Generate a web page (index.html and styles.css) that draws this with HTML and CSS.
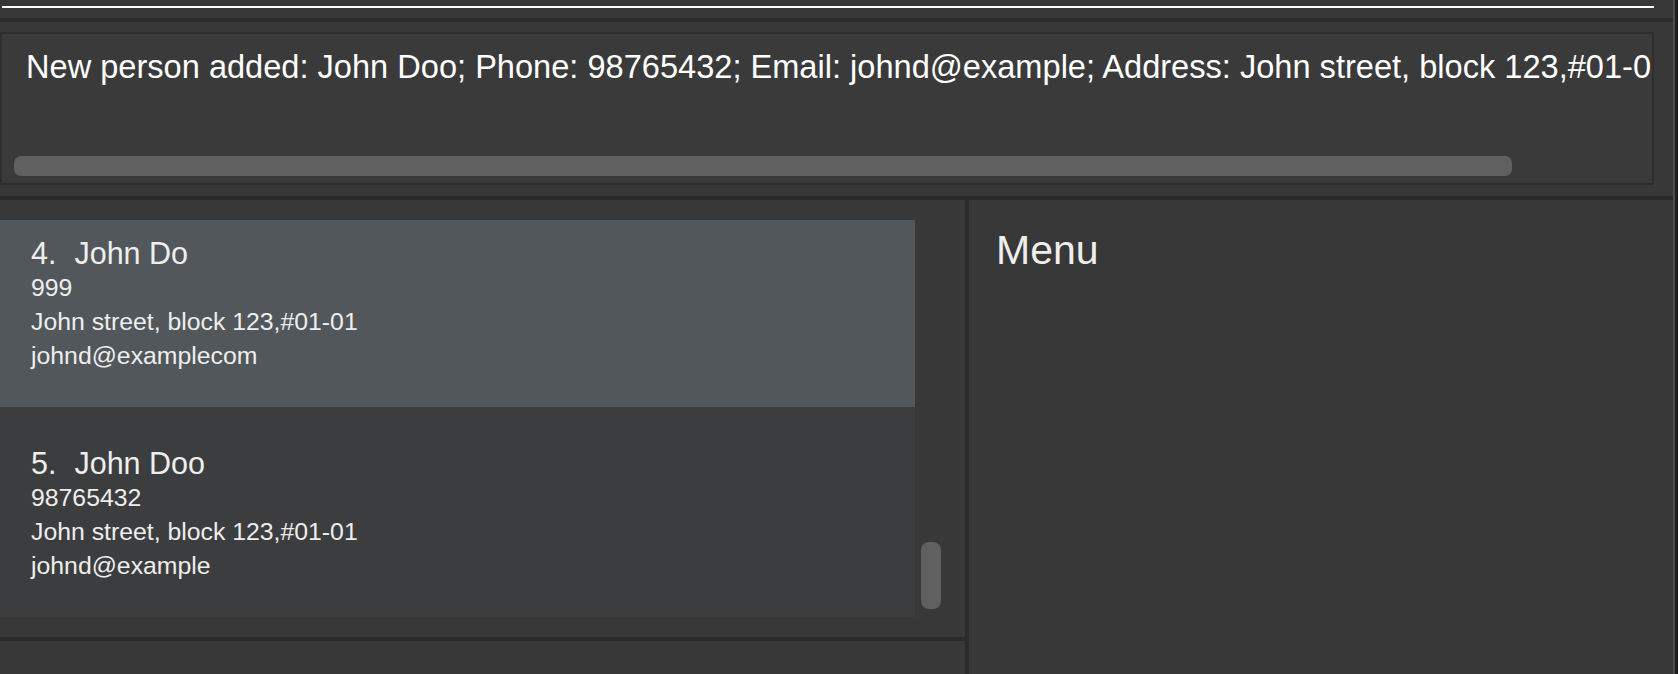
FILE: index.html
```html
<!DOCTYPE html>
<html>
<head>
<meta charset="utf-8">
<link rel="stylesheet" href="styles.css">
</head>
<body>
<div class="screen">
  <div class="window">
    <div class="command"><div class="command-line"></div></div>
    <div class="sep"></div>
    <div class="result-wrap">
      <div class="result">
        <div class="result-text">New person added: John Doo; Phone: 98765432; Email: johnd@example; Address: John street, block 123,#01-01</div>
        <div class="hthumb"></div>
      </div>
    </div>
    <div class="sep"></div>
    <div class="main">
      <div class="list-panel">
        <div class="list">
          <div class="cards">
            <div class="card card-selected">
              <div class="name-row"><span class="cid">4.</span><span class="cname">John Do</span></div>
              <div class="detail">999</div>
              <div class="detail">John street, block 123,#01-01</div>
              <div class="detail">johnd@examplecom</div>
            </div>
            <div class="card card-odd">
              <div class="name-row"><span class="cid">5.</span><span class="cname">John Doo</span></div>
              <div class="detail">98765432</div>
              <div class="detail">John street, block 123,#01-01</div>
              <div class="detail">johnd@example</div>
            </div>
          </div>
          <div class="vscroll"><div class="vthumb"></div></div>
        </div>
        <div class="list-sep"></div>
      </div>
      <div class="vdiv"></div>
      <div class="menu-panel">
        <div class="menu-title">Menu</div>
      </div>
    </div>
  </div>
  <div class="edge"></div>
</div>
</body>
</html>
```

FILE: styles.css
```css
html, body {
  margin: 0;
  padding: 0;
}
body {
  width: 1678px;
  height: 674px;
  overflow: hidden;
  background: #383838;
  font-family: "Liberation Sans", Arial, sans-serif;
}
.screen {
  display: flex;
  width: 1678px;
  height: 674px;
}
.window {
  width: 1673px;
  height: 674px;
  display: flex;
  flex-direction: column;
  background: #383838;
}
.edge {
  width: 5px;
  height: 674px;
  background: linear-gradient(to right, #4c4c4c 0, #4c4c4c 2px, #1c1c1c 2px);
}
.command {
  height: 18px;
  box-sizing: border-box;
  padding: 6px 0 0 2px;
}
.command-line {
  width: 1652px;
  height: 2px;
  background: #ffffff;
}
.sep {
  height: 4px;
  background: #2b2b2b;
  flex: none;
}
.result-wrap {
  padding: 10px 0 11px 0;
}
.result {
  width: 1654px;
  height: 153px;
  box-sizing: border-box;
  border: 2px solid #2e2e2e;
  background: #3a3a3a;
  overflow: hidden;
  display: flex;
  flex-direction: column;
}
.result-text {
  color: #ffffff;
  font-size: 32.6px;
  line-height: 36px;
  white-space: nowrap;
  padding: 15px 0 0 24px;
}
.hthumb {
  margin: 71px 0 0 12px;
  width: 1498px;
  height: 20px;
  border-radius: 7px;
  background: #606060;
  flex: none;
}
.main {
  flex: 1;
  display: flex;
}
.list-panel {
  width: 965px;
  display: flex;
  flex-direction: column;
}
.list {
  height: 437px;
  box-sizing: border-box;
  padding-top: 20px;
  display: flex;
}
.cards {
  width: 915px;
  display: flex;
  flex-direction: column;
}
.card {
  box-sizing: border-box;
  padding-left: 31px;
  color: #eeeeee;
}
.card-selected {
  height: 187px;
  padding-top: 16px;
  background: #52575b;
}
.card-odd {
  height: 210px;
  padding-top: 39px;
  background: #3c3d3f;
}
.name-row {
  display: flex;
  font-size: 30.5px;
  line-height: 35px;
  white-space: nowrap;
}
.cid {
  margin-right: 18px;
}
.detail {
  font-size: 24.8px;
  line-height: 34px;
  white-space: nowrap;
}
.vscroll {
  width: 50px;
}
.vthumb {
  margin: 322px 0 0 6px;
  width: 20px;
  height: 67px;
  border-radius: 8px;
  background: #606060;
}
.list-sep {
  height: 4px;
  background: #2b2b2b;
}
.vdiv {
  width: 4px;
  background: #2b2b2b;
}
.menu-panel {
  flex: 1;
  padding: 27px 0 0 27px;
}
.menu-title {
  color: #eeeeee;
  font-size: 41px;
  line-height: 46px;
}
```
